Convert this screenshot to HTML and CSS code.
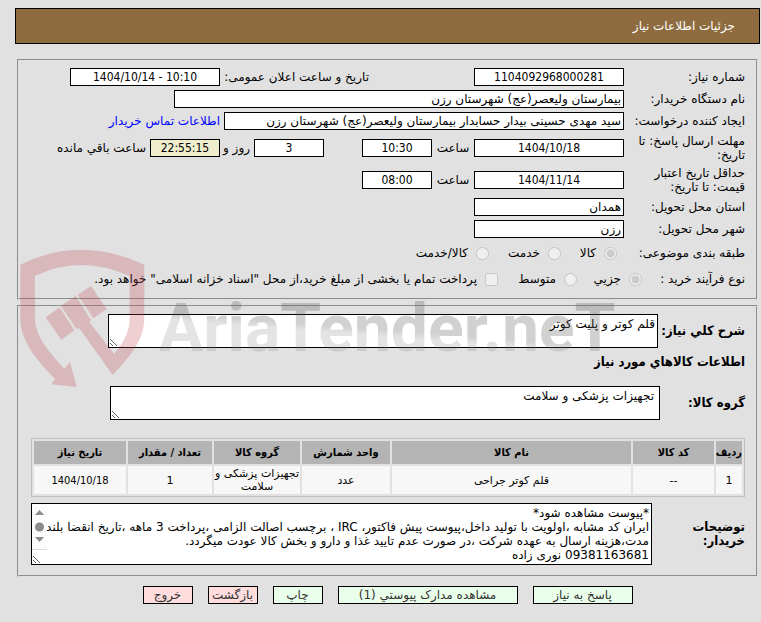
FILE: index.html
```html
<!DOCTYPE html>
<html lang="fa" dir="rtl">
<head>
<meta charset="utf-8">
<title>جزئیات اطلاعات نیاز</title>
<link rel="stylesheet" href="styles.css">
</head>
<body>
<h1 class="title">جزئیات اطلاعات نیاز</h1>
<form class="form">
  <fieldset class="panel panel-top">
    <div class="row">
      <label class="name" for="number">شماره نیاز:</label>
      <input class="box medium number" id="number" value="1104092968000281" readonly>
      <label class="announce" for="announced">تاریخ و ساعت اعلان عمومی:</label>
      <input class="box medium number" id="announced" value="1404/10/14 - 10:10" dir="ltr" readonly>
    </div>
    <div class="row">
      <label class="name" for="buyer">نام دستگاه خریدار:</label>
      <input class="box widest" id="buyer" value="بیمارستان ولیعصر(عج) شهرستان رزن" readonly>
    </div>
    <div class="row">
      <label class="name" for="creator">ایجاد کننده درخواست:</label>
      <input class="box wide" id="creator" value="سید مهدی حسینی بیدار حسابدار بیمارستان ولیعصر(عج) شهرستان رزن" readonly>
      <a class="contact" href="#contact">اطلاعات تماس خریدار</a>
    </div>
    <div class="row">
      <label class="name" for="deadline">مهلت ارسال پاسخ: تا تاریخ:</label>
      <input class="box medium number" id="deadline" value="1404/10/18" readonly>
      <label class="hour" for="deadline-hour">ساعت</label>
      <input class="box small number" id="deadline-hour" value="10:30" readonly>
      <input class="box small number days" id="days" value="3" readonly>
      <label class="and" for="days">روز و</label>
      <input class="box small number clock" id="clock" value="22:55:15" readonly>
      <label class="remaining" for="clock">ساعت باقي مانده</label>
    </div>
    <div class="row">
      <label class="name" for="validity">حداقل تاریخ اعتبار<br>قیمت: تا تاریخ:</label>
      <input class="box medium number" id="validity" value="1404/11/14" readonly>
      <label class="hour" for="validity-hour">ساعت</label>
      <input class="box small number" id="validity-hour" value="08:00" readonly>
    </div>
    <div class="row">
      <label class="name" for="province">استان محل تحویل:</label>
      <input class="box medium" id="province" value="همدان" readonly>
    </div>
    <div class="row">
      <label class="name" for="city">شهر محل تحویل:</label>
      <input class="box medium" id="city" value="رزن" readonly>
    </div>
    <div class="row choices">
      <span class="name subject">طبقه بندی موضوعی:</span>
      <label class="choice goods"><input type="radio" name="subject" checked disabled>کالا</label>
      <label class="choice service"><input type="radio" name="subject" disabled>خدمت</label>
      <label class="choice"><input type="radio" name="subject" disabled>کالا/خدمت</label>
    </div>
    <div class="row choices">
      <span class="name process">نوع فرآیند خرید :</span>
      <label class="choice minor"><input type="radio" name="process" checked disabled>جزیي</label>
      <label class="choice average"><input type="radio" name="process" disabled>متوسط</label>
      <label class="choice"><input type="checkbox" disabled>پرداخت تمام یا بخشی از مبلغ خرید،از محل "اسناد خزانه اسلامی" خواهد بود.</label>
    </div>
  </fieldset>

  <fieldset class="panel panel-items">
    <div class="line">
      <label class="strong" for="summary">شرح کلي نیاز:</label>
      <textarea class="area" id="summary" readonly>قلم کوتر و پلیت کوتر</textarea>
    </div>
    <h2 class="strong heading">اطلاعات کالاهاي مورد نیاز</h2>
    <div class="line">
      <label class="strong group" for="group">گروه کالا:</label>
      <textarea class="area inset" id="group" readonly>تجهیزات پزشکی و سلامت</textarea>
    </div>
    <table class="items">
      <colgroup><col class="c-row"><col class="c-code"><col><col class="c-unit"><col class="c-group"><col class="c-count"><col class="c-date"></colgroup>
      <thead>
        <tr><th>ردیف</th><th>کد کالا</th><th>نام کالا</th><th>واحد شمارش</th><th>گروه کالا</th><th>تعداد / مقدار</th><th>تاریخ نیاز</th></tr>
      </thead>
      <tbody>
        <tr><td>1</td><td>--</td><td>قلم کوتر جراحی</td><td>عدد</td><td>تجهیزات پزشکی و سلامت</td><td>1</td><td class="date">1404/10/18</td></tr>
      </tbody>
    </table>
    <div class="line notes-line">
      <label class="strong notes-label" for="notes">توضیحات خریدار:</label>
      <div class="notes-wrap">
        <textarea class="area notes" id="notes" readonly>*پیوست مشاهده شود*
ایران کد مشابه ،اولویت با تولید داخل،پیوست پیش فاکتور، IRC ، برچسب اصالت الزامی ،پرداخت 3 ماهه ،تاریخ انقضا بلند
مدت،هزینه ارسال به عهده شرکت ،در صورت عدم تایید غذا و دارو و بخش کالا عودت میگردد.
09381163681 نوری زاده</textarea>
        <svg class="scroll" viewBox="0 0 15 46" aria-hidden="true"><rect width="15" height="46" fill="#fcfcfc"/><path d="M3 11 7.500 6 12 11zM3 33h9L7.500 38z" fill="#8b8b8b"/><circle cx="7.500" cy="23" r="4.500" fill="#8b8b8b"/><path d="M0 45.500h15" stroke="#dcdcdc"/></svg>
      </div>
    </div>
  </fieldset>

  <div class="actions">
    <button class="btn" type="button">پاسخ به نیاز</button>
    <button class="btn btn-wide" type="button">مشاهده مدارک پیوستي (1)</button>
    <button class="btn btn-short" type="button">چاپ</button>
    <button class="btn btn-short btn-red" type="button">بازگشت</button>
    <button class="btn btn-short btn-red" type="button">خروج</button>
  </div>
</form>

<svg class="watermark" viewBox="0 0 620 150" aria-hidden="true">
  <defs><linearGradient id="shade" gradientUnits="userSpaceOnUse" x1="150" y1="50" x2="145" y2="115"><stop offset=".35" stop-color="#555" stop-opacity=".27"/><stop offset=".45" stop-color="#777" stop-opacity=".2"/></linearGradient></defs>
  <g transform="scale(.333333)" fill="#be4146" fill-opacity=".25">
    <path d="M31 74Q210-15 403 74V235C403 300 360 350 308 405L208 265 200 268 153 198 197 167 243 240 238 246 312 342C345 305 359 270 359 235V108Q210 42 75 108V235C75 290 120 340 163 386L180 365 200 441 123 433 136 418C90 370 31 310 31 235Z"/>
    <path d="M203 165 243 138 290 207 250 235ZM107 232 149 202 193 271 154 300Z"/>
  </g>
  <text x="149" y="111" class="brand" direction="ltr" fill="url(#shade)">AriaTender.neT</text>
</svg>
</body>
</html>
```
FILE: styles.css
```css
* { box-sizing: border-box; }
body {
  position: relative;
  margin: 0;
  padding: 8px 1px 16px 15px;
  background: #e1e1e1;
  color: #000;
  font: 12px/14px "DejaVu Sans", sans-serif;
}
input, textarea, button { font: inherit; color: inherit; }
.title {
  margin: 0 0 15px;
  padding: 9px 24px;
  border: 1px solid #000;
  background: #8f6c40;
  color: #fff;
  font-size: 12px;
  font-weight: normal;
  line-height: 16px;
}
.form { padding: 0 2px; }
.panel {
  min-width: 0;
  margin: 0 0 5px;
  border: 2px groove #e1e1e1;
}
.panel-top { display: flex; flex-direction: column; gap: 4px; padding: 7px 11px 8px; }
.row { display: flex; align-items: center; min-height: 18px; white-space: nowrap; }
.name { flex: none; width: 121px; white-space: normal; padding-left: 4px; }
.box {
  flex: none;
  height: 18px;
  padding: 0 2px;
  border: 1px solid #000;
  background: #fff;
}
.number { text-align: center; font-family: "DejaVu Sans Condensed", "DejaVu Sans", sans-serif; }
.small { width: 70px; }
.medium { width: 150px; }
.wide { width: 400px; }
.widest { width: 450px; }
.announce { width: 149px; margin-right: 105px; }
.contact { margin-right: 4px; color: #00f; text-decoration: none; }
.hour { width: 42px; text-align: center; }
.days { margin-right: 38px; }
.and { width: 34px; padding-right: 4px; }
.clock { background: #eeeecc; }
.remaining { margin-right: 4px; }
.choices { min-height: 22px; }
.choice { display: flex; align-items: center; gap: 8px; }
.choice input { flex: none; width: 13px; height: 13px; margin: 0; }
.subject { width: 128px; }
.goods { width: 56px; }
.service { width: 72px; }
.process { width: 103px; }
.minor { width: 65px; }
.average { width: 79px; }

.panel-items { padding: 7px 11px 10px 12px; margin-bottom: 9px; }
.line { display: flex; align-items: center; }
.strong {
  flex: none;
  width: 87px;
  font-family: "DejaVu Sans Condensed", "DejaVu Sans", sans-serif;
  font-size: 13px;
  font-weight: bold;
}
.heading { width: auto; margin: 7px 0 17px; }
.area {
  display: block;
  width: 550px;
  height: 34px;
  padding: 2px;
  border: 1px solid #000;
  background: #fff;
  overflow: hidden;
  resize: both;
}
.group { width: 85px; }
.inset { padding-right: 5px; }
.items {
  width: 100%;
  margin: 18px 0 6px;
  border: 1px solid #c0c0c0;
  border-collapse: separate;
  border-spacing: 2px;
  table-layout: fixed;
  text-align: center;
  font-size: 11px;
}
.items th {
  height: 23px;
  padding: 0;
  background: #b4b4b4;
  font-family: "DejaVu Sans Condensed", "DejaVu Sans", sans-serif;
}
.items td { height: 28px; padding: 0; background: #f7f7f7; line-height: 13px; }
.items .date { font-family: "DejaVu Sans Condensed", "DejaVu Sans", sans-serif; }
.c-row { width: 26px; }
.c-code { width: 81px; }
.c-unit { width: 88px; }
.c-group { width: 86px; }
.c-count { width: 84px; }
.c-date { width: 92px; }
.notes-label { width: 93px; padding-left: 10px; }
.notes-wrap { position: relative; flex: 1; }
.notes { width: 100%; height: 62px; white-space: pre; }
.scroll { position: absolute; top: 1px; left: 1px; width: 15px; height: 46px; }

.actions { display: flex; justify-content: center; gap: 15px; }
.btn {
  width: 100px;
  height: 18px;
  padding: 0;
  border: 1px solid #000;
  background: #eaffea;
  color: #333;
}
.btn-wide { width: 180px; }
.btn-short { width: 50px; }
.btn-red { background: #ffdddd; }

.watermark {
  position: absolute;
  top: 240px;
  left: 10px;
  width: 620px;
  height: 150px;
  pointer-events: none;
}
.brand { font: bold 66px Roboto, "Liberation Sans", sans-serif; }
```
